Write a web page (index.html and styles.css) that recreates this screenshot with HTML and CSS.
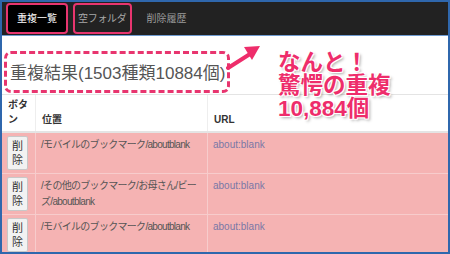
FILE: index.html
```html
<!DOCTYPE html>
<html lang="ja">
<head>
  <meta charset="utf-8">
  <title>重複一覧</title>
  <link rel="stylesheet" href="styles.css">
</head>
<body>

<div id="frame">
  <div id="nav">
    <span class="tab active">重複一覧</span>
    <span class="tab marked">空フォルダ</span>
    <span class="tab">削除履歴</span>
  </div>

  <div id="content">
    <div id="result">
      <span class="mark">重複結果(1503種類10884個)</span>
    </div>

    <!-- annotation over the page -->
    <svg id="arrow" width="40" height="30" viewBox="0 0 40 30">
      <path d="M2 26 L24 12" stroke="#ee2d6b" stroke-width="4" fill="none" stroke-linecap="round"/>
      <path d="M18 5 L34 4 L26 18 Z" fill="#ee2d6b"/>
    </svg>
    <div id="note">なんと！<br>驚愕の重複<br>10,884個</div>

    <table id="list">
      <tr>
        <th class="colBtn">ボタン</th>
        <th class="colPath">位置</th>
        <th>URL</th>
      </tr>
      <tr>
        <td><button class="del">削除</button></td>
        <td class="path">/モバイルのブックマーク/aboutblank</td>
        <td class="url">about:blank</td>
      </tr>
      <tr>
        <td><button class="del">削除</button></td>
        <td class="path">/その他のブックマーク/お母さん/ビーズ/aboutblank</td>
        <td class="url">about:blank</td>
      </tr>
      <tr>
        <td><button class="del">削除</button></td>
        <td class="path">/モバイルのブックマーク/aboutblank</td>
        <td class="url">about:blank</td>
      </tr>
    </table>
  </div>
</div>

</body>
</html>
```

FILE: styles.css
```css
html, body {
  margin: 0;
  font-family: "Liberation Sans", "Noto Sans CJK JP", sans-serif;
}

#frame {
  width: 450px;
  height: 254px;
  box-sizing: border-box;
  border: 2px solid #2f67ad;
  overflow: hidden;
  background-color: #ffffff;
}

#nav {
  display: flex;
  align-items: center;
  gap: 5px;
  height: 33px;
  padding: 0 4px;
  background-color: #222222;
  border-bottom: 1px solid #6f9bd0;
}

.tab {
  font-size: 10px;
  color: #9a9a9a;
  padding: 0 8px;
  line-height: 27px;
  border: 2px solid transparent;
  border-radius: 4px;
}

.tab.active {
  background-color: #000000;
  color: #ffffff;
  border-color: #e8356f;
  padding: 0 9px;
}

.tab.marked {
  color: #a8a8a8;
  border-color: #e8356f;
  padding: 0 3px;
  letter-spacing: -0.3px;
}

#content {
  position: relative;
}

#result {
  padding: 15px 0 1px 2px;
}

.mark {
  display: inline-block;
  font-size: 17px;
  color: #555555;
  padding: 5px 2px 6px 3px;
  border: 3px dashed #e8356f;
  border-radius: 7px;
}

#arrow {
  position: absolute;
  left: 224px;
  top: 6px;
}

#note {
  position: absolute;
  left: 276px;
  top: 15px;
  font-size: 22.5px;
  line-height: 23px;
  font-weight: bold;
  color: #ee2d6b;
  text-shadow: 1px 1px 0 #ffffff, -1px -1px 0 #ffffff, 1px -1px 0 #ffffff, -1px 1px 0 #ffffff, 2px 2px 3px rgba(0,0,0,0.35);
}

#list {
  width: 100%;
  border-collapse: collapse;
  font-size: 10px;
}

#list th {
  text-align: left;
  vertical-align: bottom;
  color: #333333;
  padding: 2px 4px 4px 6px;
  border-top: 1px solid #e4e4e4;
  border-bottom: 2px solid #e4e4e4;
  line-height: 15px;
}

#list th + th, #list td + td {
  border-left: 1px solid #eeeeee;
}

.colBtn {
  width: 23px;
}

.colPath {
  width: 161px;
}

#list td {
  background-color: #f5b3b3;
  color: #555555;
  vertical-align: top;
  padding: 3px 2px 2px 5px;
  height: 34px;
  line-height: 16px;
  border-bottom: 1px solid #f7cccc;
}

#list td.path {
  letter-spacing: -0.7px;
  padding-top: 4px;
}

#list td + td {
  border-left-color: #f7cccc;
}

#list td.url {
  color: #7a78a6;
  padding-top: 4px;
}

.del {
  width: 21px;
  padding: 2px 0;
  font-size: 11px;
  line-height: 14px;
  color: #333333;
  background-color: #f2f2f2;
  border: 1px solid #c8c8c8;
  border-radius: 2px;
  font-family: inherit;
}
```
